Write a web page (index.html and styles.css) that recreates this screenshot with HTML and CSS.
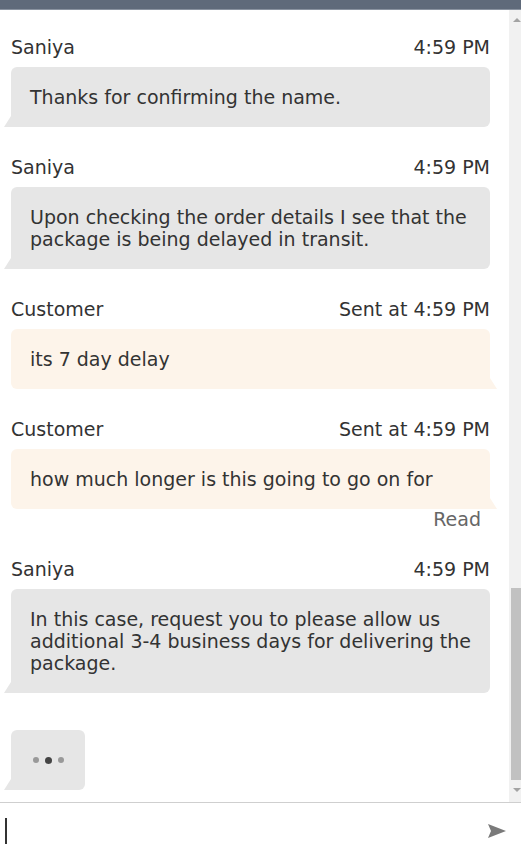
FILE: index.html
```html
<!DOCTYPE html>
<html lang="en">
<head>
    <meta charset="UTF-8">
    <meta name="viewport" content="width=device-width, initial-scale=1.0">
    <title>Chat</title>
    <link rel="stylesheet" href="styles.css">
</head>
<body>
    <div class="topbar"></div>
    <div class="chat">
        <div class="messages">
            <div class="msg agent">
                <div class="meta"><span>Saniya</span><span>4:59 PM</span></div>
                <div class="bubble">Thanks for confirming the name.</div>
            </div>
            <div class="msg agent">
                <div class="meta"><span>Saniya</span><span>4:59 PM</span></div>
                <div class="bubble">Upon checking the order details I see that the package is being delayed in transit.</div>
            </div>
            <div class="msg customer">
                <div class="meta"><span>Customer</span><span>Sent at 4:59 PM</span></div>
                <div class="bubble">its 7 day delay</div>
            </div>
            <div class="msg customer">
                <div class="meta"><span>Customer</span><span>Sent at 4:59 PM</span></div>
                <div class="bubble">how much longer is this going to go on for</div>
                <div class="status">Read</div>
            </div>
            <div class="msg agent">
                <div class="meta"><span>Saniya</span><span>4:59 PM</span></div>
                <div class="bubble">In this case, request you to please allow us additional 3-4 business days for delivering the package.</div>
            </div>
            <div class="typing">
                <span class="dot"></span><span class="dot dark"></span><span class="dot"></span>
            </div>
        </div>
        <div class="scrollbar">
            <span class="arrow up"></span>
            <div class="track-space"></div>
            <div class="thumb"></div>
            <span class="arrow down"></span>
        </div>
    </div>
    <div class="composer">
        <span class="caret"></span>
        <svg class="send" width="20" height="18" viewBox="0 0 20 18">
            <path d="M1 2 L19 9 L1 16 L4 9 Z" fill="#7a7a7a"/>
        </svg>
    </div>
</body>
</html>
```

FILE: styles.css
```css
body {
    margin: 0;
    font-family: "DejaVu Sans", Verdana, sans-serif;
    font-size: 19px;
    color: #333;
    background: #fff;
    width: 521px;
    height: 857px;
    overflow: hidden;
    display: flex;
    flex-direction: column;
}
.topbar {
    height: 10px;
    background: #5f6a7a;
    border-bottom: 1px solid #8a93a0;
    box-sizing: border-box;
}
.chat {
    display: flex;
    height: 792px;
}
.messages {
    flex: 1;
    padding: 27px 19px 0 11px;
    display: flex;
    flex-direction: column;
    gap: 30px;
}
.msg {
    display: flex;
    flex-direction: column;
}
.meta {
    display: flex;
    justify-content: space-between;
    line-height: 20px;
    margin-bottom: 10px;
}
.bubble {
    position: relative;
    border-radius: 6px;
    padding: 19px 12px 19px 19px;
    line-height: 22px;
    background: #e6e6e6;
}
.customer .bubble {
    background: #fdf4ea;
}
.agent .bubble::before {
    content: "";
    position: absolute;
    left: -7px;
    bottom: 0;
    width: 14px;
    height: 11px;
    background: #e6e6e6;
    clip-path: polygon(50% 0, 100% 0, 100% 100%, 0 100%);
}
.customer .bubble::after {
    content: "";
    position: absolute;
    right: -7px;
    bottom: 0;
    width: 14px;
    height: 11px;
    background: #fdf4ea;
    clip-path: polygon(0 0, 50% 0, 100% 100%, 0 100%);
}
.status {
    text-align: right;
    color: #666;
    line-height: 20px;
    padding-right: 9px;
}
.typing {
    position: relative;
    align-self: flex-start;
    width: 74px;
    height: 60px;
    margin-top: 7px;
    border-radius: 6px;
    background: #e6e6e6;
    display: flex;
    align-items: center;
    justify-content: center;
    gap: 6px;
}
.typing::before {
    content: "";
    position: absolute;
    left: -7px;
    bottom: 0;
    width: 14px;
    height: 11px;
    background: #e6e6e6;
    clip-path: polygon(50% 0, 100% 0, 100% 100%, 0 100%);
}
.dot {
    width: 6px;
    height: 6px;
    border-radius: 50%;
    background: #999;
}
.dot.dark {
    width: 7px;
    height: 7px;
    background: #444;
}
.scrollbar {
    width: 12px;
    background: #f1f1f1;
    display: flex;
    flex-direction: column;
    align-items: center;
}
.arrow {
    width: 0;
    height: 0;
    border-left: 4px solid transparent;
    border-right: 4px solid transparent;
    margin: 8px 0 0 4px;
}
.arrow.up {
    border-bottom: 4px solid #a3a3a3;
}
.arrow.down {
    border-top: 4px solid #a3a3a3;
    margin: 8px 0 10px 4px;
}
.track-space {
    flex: 1;
}
.thumb {
    width: 10px;
    height: 192px;
    margin-left: 2px;
    background: #c1c1c1;
}
.composer {
    flex: 1;
    border-top: 1px solid #cfcfcf;
    display: flex;
    align-items: center;
    justify-content: space-between;
    padding: 2px 14px 0 5px;
}
.caret {
    width: 2px;
    height: 26px;
    background: #333;
}
.send {
    display: block;
}
```
